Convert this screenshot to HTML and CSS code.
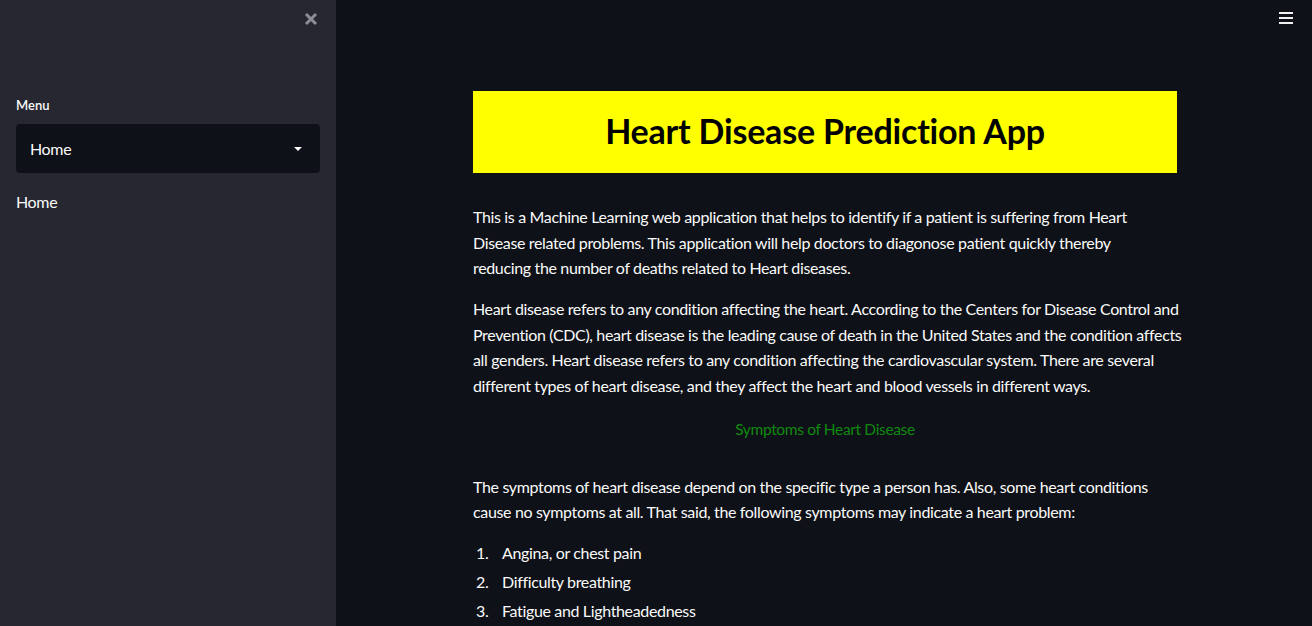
FILE: index.html
```html
<!DOCTYPE html>
<html lang="en">
<head>
<meta charset="utf-8">
<title>Heart Disease Prediction App</title>
<link rel="stylesheet" href="styles.css">
</head>
<body>
<div class="app">
  <aside class="sidebar">
    <div class="sidebar-header">
      <button class="close-btn" aria-label="Close sidebar">
        <svg width="14" height="14" viewBox="0 0 14 14"><path d="M2 2 L12 12 M12 2 L2 12" stroke="currentColor" stroke-width="3" stroke-linecap="butt"/></svg>
      </button>
    </div>
    <div class="sidebar-body">
      <div class="field-label">Menu</div>
      <div class="select">
        <span class="select-value">Home</span>
        <svg class="caret" width="8" height="4" viewBox="0 0 8 4"><path d="M0 0 L8 0 L4 4 Z" fill="currentColor"/></svg>
      </div>
      <div class="sidebar-text">Home</div>
    </div>
  </aside>
  <main class="main">
    <div class="toolbar">
      <button class="menu-btn" aria-label="Main menu">
        <span></span><span></span><span></span>
      </button>
    </div>
    <div class="content">
      <div class="title-box"><h1>Heart Disease Prediction App</h1></div>
      <p>This is a Machine Learning web application that helps to identify if a patient is suffering from Heart<br>Disease related problems. This application will help doctors to diagonose patient quickly thereby<br>reducing the number of deaths related to Heart diseases.</p>
      <p>Heart disease refers to any condition affecting the heart. According to the Centers for Disease Control and<br>Prevention (CDC), heart disease is the leading cause of death in the United States and the condition affects<br>all genders. Heart disease refers to any condition affecting the cardiovascular system. There are several<br>different types of heart disease, and they affect the heart and blood vessels in different ways.</p>
      <p class="subhead">Symptoms of Heart Disease</p>
      <p>The symptoms of heart disease depend on the specific type a person has. Also, some heart conditions<br>cause no symptoms at all. That said, the following symptoms may indicate a heart problem:</p>
      <ol class="list">
        <li>Angina, or chest pain</li>
        <li>Difficulty breathing</li>
        <li>Fatigue and Lightheadedness</li>
      </ol>
    </div>
  </main>
</div>
</body>
</html>
```
FILE: styles.css
```css
* { box-sizing: border-box; }
html, body { margin: 0; height: 100%; }
body {
  font-family: "Lato", "Open Sans", sans-serif;
  letter-spacing: -0.35px;
  color: #fafafa;
  background: #0e1117;
  overflow: hidden;
}
.app { display: flex; height: 100vh; }

.sidebar {
  width: 336px;
  flex: 0 0 336px;
  background: #262730;
  display: flex;
  flex-direction: column;
}
.sidebar-header {
  height: 38px;
  flex-shrink: 0;
  display: flex;
  justify-content: flex-end;
  align-items: center;
  padding-right: 18px;
}
.close-btn {
  background: none;
  border: 0;
  padding: 0;
  width: 14px;
  height: 14px;
  color: #8c8e97;
  display: flex;
}
.sidebar-body { padding: 57px 16px 0; }
.field-label {
  font-size: 13px;
  line-height: 20px;
  font-weight: 600;
  letter-spacing: 0;
  margin-bottom: 9px;
}
.select {
  height: 49px;
  background: #0e1117;
  border-radius: 4px;
  display: flex;
  align-items: center;
  justify-content: space-between;
  padding: 0 18px 0 14px;
  font-size: 16px;
}
.caret { color: #fafafa; }
.sidebar-text {
  margin-top: 16px;
  font-size: 16px;
  line-height: 26px;
}

.main {
  flex: 1;
  display: flex;
  flex-direction: column;
  min-width: 0;
}
.toolbar {
  height: 36px;
  flex-shrink: 0;
  display: flex;
  justify-content: flex-end;
  align-items: center;
  padding-right: 19px;
}
.menu-btn {
  background: none;
  border: 0;
  padding: 0;
  width: 14px;
  display: flex;
  flex-direction: column;
  gap: 3px;
}
.menu-btn span {
  display: block;
  height: 2px;
  background: #f0f0f0;
}
.content {
  width: 704px;
  flex-shrink: 0;
  margin: 55px 0 0 137px;
}
.title-box {
  background: #ffff00;
  height: 82px;
  display: flex;
  align-items: center;
  justify-content: center;
  padding-bottom: 3px;
  margin-bottom: 31px;
}
.title-box h1 {
  margin: 0;
  color: #000;
  font-size: 34px;
  font-weight: 700;
  letter-spacing: -0.2px;
}
.content p {
  margin: 0 0 15.4px;
  font-size: 16px;
  line-height: 25.6px;
  white-space: nowrap;
}
.content p.subhead {
  text-align: center;
  color: #0f8a0f;
  font-size: 15.5px;
  margin-top: 18.4px;
  margin-bottom: 31px;
}
.list {
  list-style: none;
  margin: 0;
  padding: 0;
  counter-reset: item;
  font-size: 16px;
  line-height: 25.6px;
}
.list li {
  counter-increment: item;
  display: flex;
  margin-bottom: 3.4px;
}
.list li::before {
  content: counter(item) ".";
  width: 26px;
  flex: 0 0 26px;
  padding-left: 3px;
}
```
